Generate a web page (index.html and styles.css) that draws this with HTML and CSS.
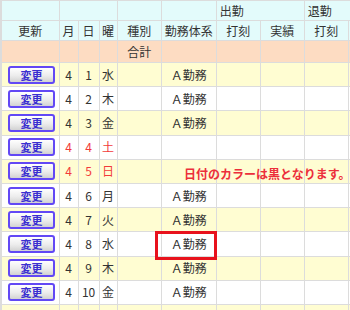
FILE: index.html
```html
<!DOCTYPE html>
<html lang="ja">
<head>
<meta charset="utf-8">
<link rel="stylesheet" href="styles.css">
</head>
<body>
<div class="wrap">
<table class="grid">
<colgroup>
<col class="c-upd"><col class="c-m"><col class="c-d"><col class="c-w"><col class="c-type"><col class="c-sys"><col class="c-t"><col class="c-t"><col class="c-t"><col class="c-t">
</colgroup>
<thead>
<tr class="h1">
<th></th><th colspan="3"></th><th></th><th></th><th colspan="2" class="grp">出勤</th><th colspan="2" class="grp">退勤</th>
</tr>
<tr class="h2">
<th>更新</th><th>月</th><th>日</th><th>曜</th><th>種別</th><th>勤務体系</th><th>打刻</th><th>実績</th><th>打刻</th><th></th>
</tr>
<tr class="sum">
<td></td><td></td><td></td><td></td><td>合計</td><td></td><td></td><td></td><td></td><td></td>
</tr>
</thead>
<tbody>
<tr class="odd"><td><button class="btn">変更</button></td><td>4</td><td>1</td><td>水</td><td></td><td>Ａ勤務</td><td></td><td></td><td></td><td></td></tr>
<tr><td><button class="btn">変更</button></td><td>4</td><td>2</td><td>木</td><td></td><td>Ａ勤務</td><td></td><td></td><td></td><td></td></tr>
<tr class="odd"><td><button class="btn">変更</button></td><td>4</td><td>3</td><td>金</td><td></td><td>Ａ勤務</td><td></td><td></td><td></td><td></td></tr>
<tr class="hol"><td><button class="btn">変更</button></td><td>4</td><td>4</td><td>土</td><td></td><td></td><td></td><td></td><td></td><td></td></tr>
<tr class="odd hol"><td><button class="btn">変更</button></td><td>4</td><td>5</td><td>日</td><td></td><td></td><td></td><td></td><td></td><td></td></tr>
<tr><td><button class="btn">変更</button></td><td>4</td><td>6</td><td>月</td><td></td><td>Ａ勤務</td><td></td><td></td><td></td><td></td></tr>
<tr class="odd"><td><button class="btn">変更</button></td><td>4</td><td>7</td><td>火</td><td></td><td>Ａ勤務</td><td></td><td></td><td></td><td></td></tr>
<tr><td><button class="btn">変更</button></td><td>4</td><td>8</td><td>水</td><td></td><td>Ａ勤務</td><td></td><td></td><td></td><td></td></tr>
<tr class="odd"><td><button class="btn">変更</button></td><td>4</td><td>9</td><td>木</td><td></td><td>Ａ勤務</td><td></td><td></td><td></td><td></td></tr>
<tr><td><button class="btn">変更</button></td><td>4</td><td>10</td><td>金</td><td></td><td>Ａ勤務</td><td></td><td></td><td></td><td></td></tr>
<tr class="odd"><td></td><td></td><td></td><td></td><td></td><td></td><td></td><td></td><td></td><td></td></tr>
</tbody>
</table>
<div class="note">日付のカラーは黒となります。</div>
<div class="mark"></div>
</div>
</body>
</html>
```
FILE: styles.css
```css
html, body {
  margin: 0;
  padding: 0;
  overflow: hidden;
  background: #fff;
}
.wrap {
  position: relative;
  width: 350px;
  height: 310px;
  overflow: hidden;
  font-family: "Noto Sans CJK JP", sans-serif;
  font-size: 12px;
  color: #333;
}
.grid {
  border-collapse: collapse;
  table-layout: fixed;
  width: 393px;
  border-left: 2px solid #dcdcdc;
  border-top: 1px solid #dcdcdc;
}
.c-upd { width: 58px; }
.c-m { width: 19px; }
.c-d { width: 21px; }
.c-w { width: 18px; }
.c-type { width: 44px; }
.c-sys { width: 55px; }
.c-t { width: 44px; }
.grid th, .grid td {
  border: 1px solid #dcdcdc;
  padding: 0;
  text-align: center;
  font-weight: normal;
  white-space: nowrap;
  overflow: hidden;
  line-height: 14px;
}
.h1 th {
  background: #e3fbfb;
  height: 19px;
}
.h2 th {
  background: #e3fbfb;
  height: 19px;
}
.grp {
  text-align: left !important;
  padding-left: 3px !important;
}
.sum td {
  background: #fddcc2;
  height: 21px;
}
tbody td {
  height: 23.2px;
  background: #fff;
}
tbody tr.odd td {
  background: #fffdd2;
}
tbody tr.hol td:nth-child(2),
tbody tr.hol td:nth-child(3),
tbody tr.hol td:nth-child(4) {
  color: #f23a3a;
}
.btn {
  display: block;
  margin: 0 auto 0 6px;
  width: 47px;
  height: 18px;
  box-sizing: border-box;
  border: 2px solid #6248f5;
  border-radius: 3px;
  background: linear-gradient(#ffffff, #ececec 55%, #d2d2d2);
  color: #3a2fd0;
  font-family: "Noto Sans CJK JP", sans-serif;
  font-size: 11px;
  font-weight: bold;
  line-height: 12px;
  padding: 0;
}
.note {
  position: absolute;
  left: 184px;
  top: 166px;
  color: #ec2f3b;
  font-weight: bold;
  font-size: 12px;
  line-height: 16px;
  white-space: nowrap;
}
.mark {
  position: absolute;
  left: 155px;
  top: 231px;
  width: 62px;
  height: 29px;
  box-sizing: border-box;
  border: 3px solid #e8121c;
}
```
